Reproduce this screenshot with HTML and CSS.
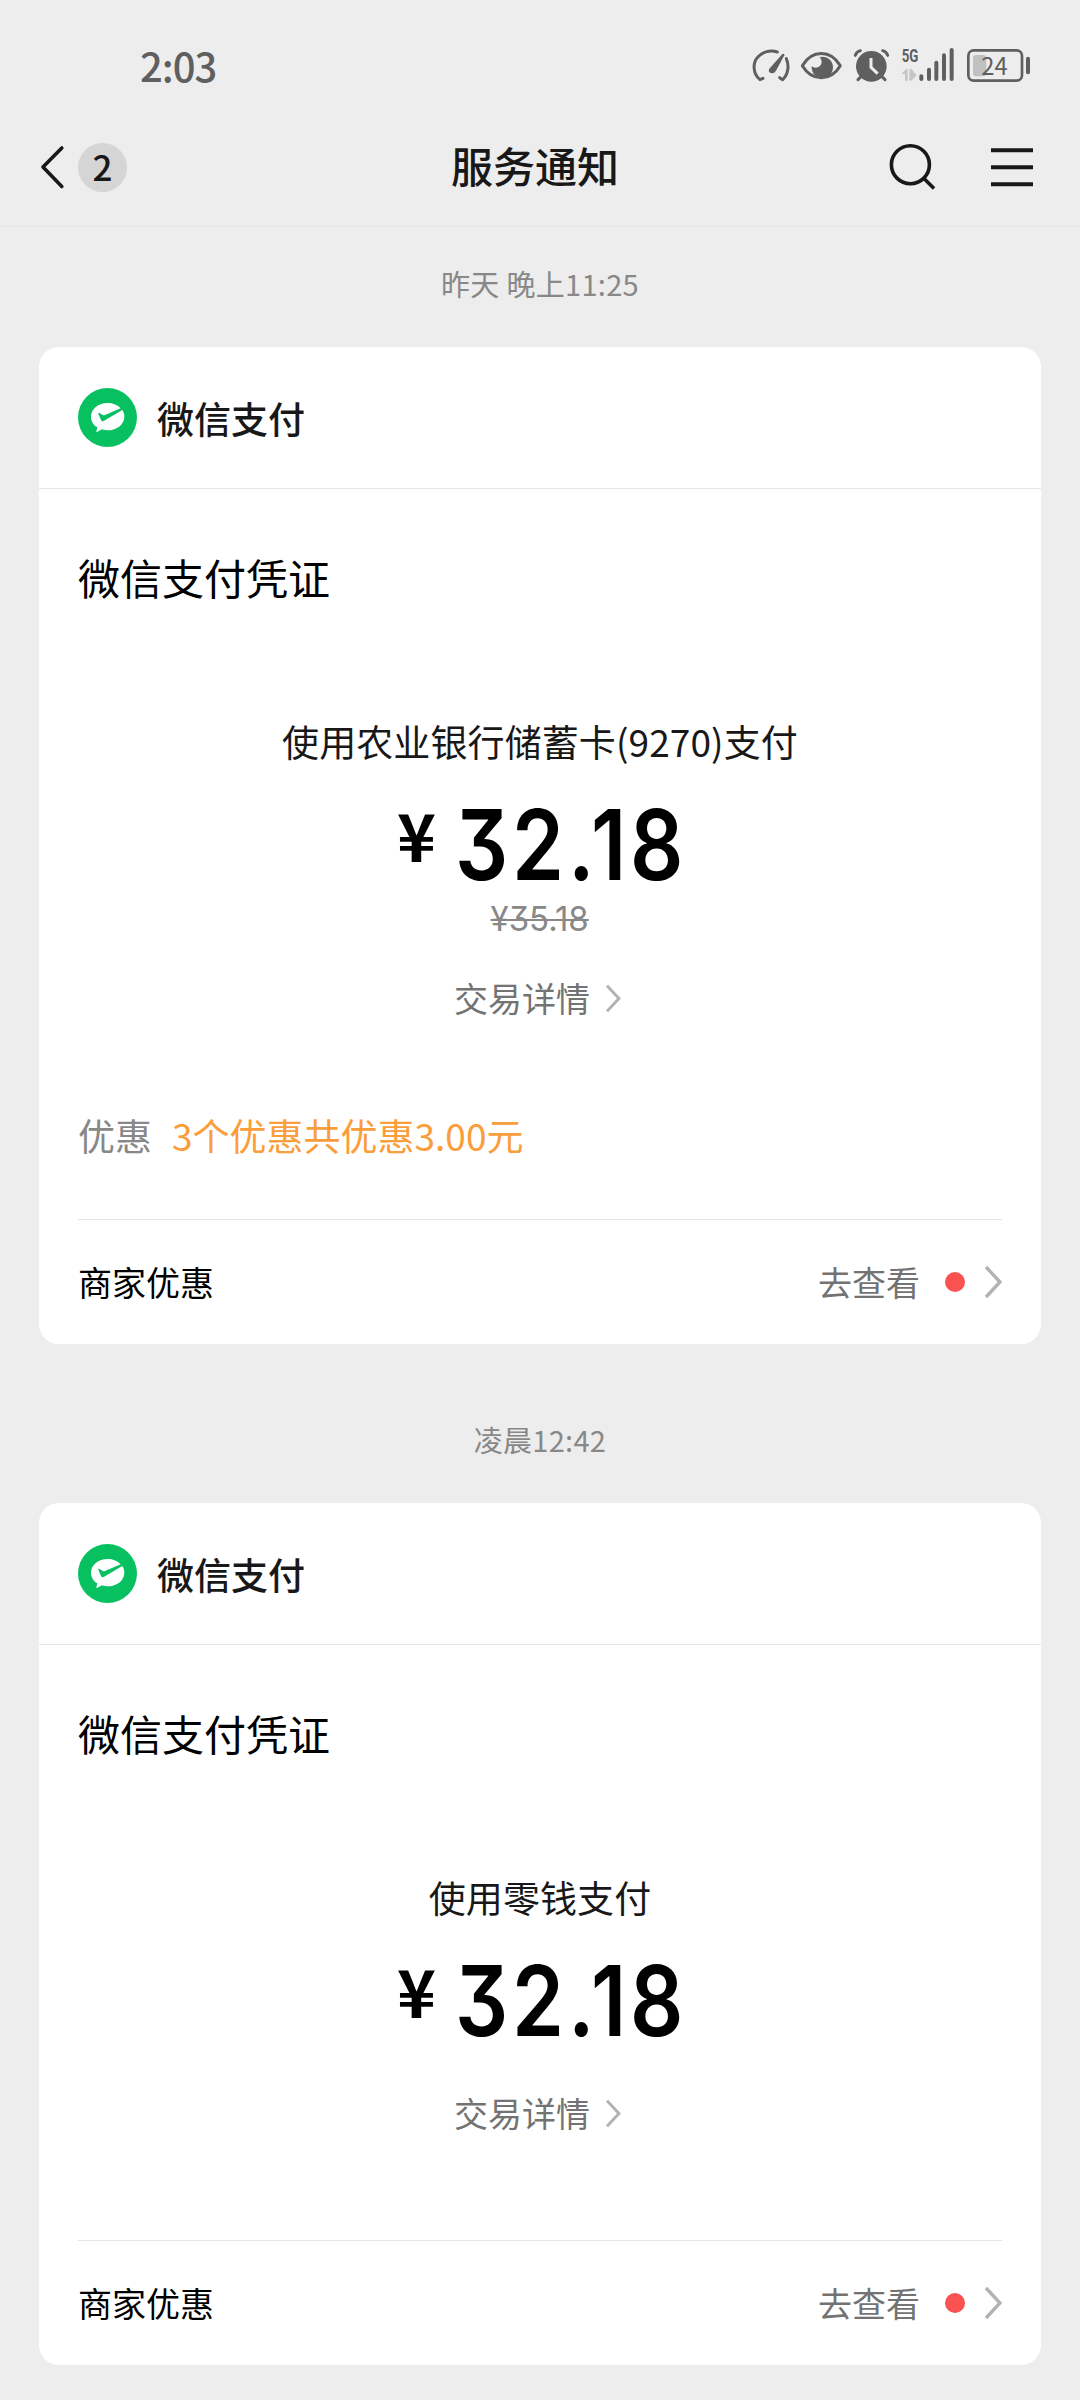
FILE: index.html
```html
<!DOCTYPE html>
<html lang="zh-CN">
<head>
<meta charset="utf-8">
<title>服务通知</title>
<link rel="stylesheet" href="styles.css">
</head>
<body>
<svg class="defs" aria-hidden="true">
  <symbol id="pay-logo" viewBox="174 174 177 177">
    <circle cx="262.500" cy="262.500" r="88.500" fill="#07c160"/>
    <path fill="#fff" d="M263 219C235 219 213 237 213 260C213 273 220 285 232 292L229 304Q229 307 232 305L246 298Q254 301 263 301C291 301 313 283 313 260C313 252 311 246 307 240L251 273Q246 276 243 270L235 251Q235 247 239 249L248 255Q251 257 255 255L302 235C293 225 279 219 263 219Z"/>
  </symbol>
  <symbol id="chevron" viewBox="0 0 18 34">
    <path d="M2 2L16 17L2 32" fill="none" stroke="#b2b2b2" stroke-width="3.400"/>
  </symbol>
</svg>

<header class="top">
  <div class="status">
    <span class="clock">2:03</span>
    <div class="status-icons">
      <svg width="48" height="38" viewBox="66 48 144 114">
        <g fill="none" stroke="#5f5f5f" stroke-width="9" stroke-linecap="round" stroke-linejoin="round">
          <path d="M99 145L90 149C70 133 66 101 83 82C98 64 122 60 142 66M169 86C178 107 175 133 158 149L149 143"/>
        </g>
        <path fill="#5f5f5f" d="M157 72Q163 69 163 76L138 122Q132 132 122 129Q113 124 118 116Z"/>
      </svg>
      <svg width="52" height="38" viewBox="210 48 156 114">
        <circle cx="277" cy="112" r="32" fill="#5f5f5f"/>
        <circle cx="257" cy="95" r="18" fill="#ededed"/>
        <path d="M217 107C246 58 302 58 331 107C302 155 246 155 217 107Z" fill="none" stroke="#5f5f5f" stroke-width="9" stroke-linejoin="round"/>
      </svg>
      <svg width="48" height="38" viewBox="366 48 144 114">
        <circle cx="424" cy="109" r="46" fill="#5f5f5f"/>
        <g fill="none" stroke="#5f5f5f" stroke-width="9" stroke-linecap="round">
          <path d="M376 76Q380 65 391 62M458 62Q469 65 473 76M392 141L384 149M457 141L465 149"/>
        </g>
        <path d="M423 84V112L443 131" fill="none" stroke="#ededed" stroke-width="9"/>
      </svg>
      <svg width="66" height="38" viewBox="510 48 198 114">
        <text class="net" x="515" y="96" textLength="50" lengthAdjust="spacingAndGlyphs">5G</text>
        <path fill="#c6c6c6" d="M514 132L528 117H533V152H525V132ZM538 117H544L560 136L544 152H538Z"/>
        <g stroke="#5f5f5f" stroke-width="12" stroke-linecap="round">
          <path d="M574 139V147M597 119V147M619 98V147M642 76V147M665 60V147"/>
        </g>
      </svg>
      <svg width="65" height="38" viewBox="708 48 195 114">
        <rect x="729" y="75" width="40" height="64" rx="9" fill="#c0c0c0"/>
        <rect x="715" y="61" width="161" height="91" rx="16" fill="none" stroke="#5f5f5f" stroke-width="8"/>
        <path d="M894 86V127" stroke="#5f5f5f" stroke-width="12" stroke-linecap="round"/>
        <text class="level" x="754" y="134" textLength="79" lengthAdjust="spacingAndGlyphs">24</text>
      </svg>
    </div>
  </div>
  <nav class="nav">
    <div class="nav-back">
      <svg width="26" height="46" viewBox="0 0 26 46"><path d="M22.800 4L4 23L22.800 42.500" fill="none" stroke="#181818" stroke-width="3.600" stroke-linecap="round" stroke-linejoin="round"/></svg>
      <span class="count">2</span>
    </div>
    <h1 class="nav-title">服务通知</h1>
    <div class="nav-actions">
      <svg width="48" height="48" viewBox="0 0 48 48"><g fill="none" stroke="#181818" stroke-width="3.600"><circle cx="22.400" cy="21.700" r="19"/><path d="M35.500 35L46 45.500"/></g></svg>
      <svg width="42" height="48" viewBox="0 0 42 48"><path d="M0 7.300H42M0 24.300H42M0 41.300H42" stroke="#181818" stroke-width="4"/></svg>
    </div>
  </nav>
</header>

<main class="feed">
  <time class="stamp">昨天 晚上11:25</time>
  <article class="card">
    <header class="card-head"><svg class="logo"><use href="#pay-logo"/></svg><span>微信支付</span></header>
    <div class="card-body">
      <h2 class="card-title">微信支付凭证</h2>
      <p class="method">使用农业银行储蓄卡(9270)支付</p>
      <p class="amount"><span class="yen">¥</span><span class="value">32.18</span></p>
      <p class="origin"><span class="origin-text">¥35.18</span></p>
      <a class="detail">交易详情<svg class="chev-s"><use href="#chevron"/></svg></a>
      <p class="promo"><span class="promo-label">优惠</span><span class="promo-text">3个优惠共优惠3.00元</span></p>
    </div>
    <footer class="card-foot"><span>商家优惠</span><a class="more">去查看<i class="dot"></i><svg class="chev"><use href="#chevron"/></svg></a></footer>
  </article>

  <time class="stamp">凌晨12:42</time>
  <article class="card card-plain">
    <header class="card-head"><svg class="logo"><use href="#pay-logo"/></svg><span>微信支付</span></header>
    <div class="card-body">
      <h2 class="card-title">微信支付凭证</h2>
      <p class="method">使用零钱支付</p>
      <p class="amount"><span class="yen">¥</span><span class="value">32.18</span></p>
      <a class="detail">交易详情<svg class="chev-s"><use href="#chevron"/></svg></a>
    </div>
    <footer class="card-foot"><span>商家优惠</span><a class="more">去查看<i class="dot"></i><svg class="chev"><use href="#chevron"/></svg></a></footer>
  </article>
</main>
</body>
</html>
```
FILE: styles.css
```css
* { box-sizing: border-box; margin: 0; padding: 0; }
body {
  width: 1080px;
  height: 2400px;
  overflow: hidden;
  background: #ededed;
  color: #000;
  font-family: "Noto Sans CJK SC", sans-serif;
  font-weight: 400;
}
svg { display: block; flex: none; }
.defs { position: absolute; width: 0; height: 0; }

.top { height: 227px; border-bottom: 2px solid #e8e8e8; }
.status {
  display: flex;
  justify-content: space-between;
  align-items: center;
  height: 108px;
  padding: 22px 49px 0 140px;
}
.clock { font-size: 40px; font-weight: 500; line-height: 40px; letter-spacing: -1px; color: #5f5f5f; }
.status-icons { display: flex; }
.net { font: 700 56px Roboto, sans-serif; fill: #5f5f5f; }
.level { font: 400 73px "Noto Sans CJK SC", sans-serif; fill: #5f5f5f; }

.nav {
  display: grid;
  grid-template-columns: 1fr auto 1fr;
  align-items: center;
  height: 118px;
  padding: 0 47px 0 39px;
  color: #181818;
}
.nav-back { display: flex; align-items: center; gap: 13px; }
.count {
  width: 49px;
  height: 49px;
  border-radius: 50%;
  background: #d5d5d5;
  font-size: 35px;
  font-weight: 500;
  line-height: 46px;
  text-align: center;
}
.nav-title { font-size: 42px; font-weight: 500; line-height: 60px; padding-bottom: 4px; margin-right: 2px; }
.nav-actions { display: flex; justify-content: flex-end; gap: 55px; }

.feed { padding: 0 39px; }
.stamp {
  display: block;
  height: 120px;
  padding-top: 36px;
  font-size: 29px;
  letter-spacing: .3px;
  line-height: 40px;
  text-align: center;
  color: #888;
}
.card { height: 997px; border-radius: 20px; background: #fff; display: flex; flex-direction: column; }
.card + .stamp { height: 159px; padding-top: 75px; }
.card-plain { height: 862px; }
.card-head {
  display: flex;
  align-items: center;
  gap: 20px;
  height: 142px;
  padding: 0 39px;
  border-bottom: 1px solid #e5e5e5;
  font-size: 37px;
  font-weight: 500;
  line-height: 54px;
  color: #181818;
}
.logo { width: 59px; height: 59px; }
.card-body { flex: 1; padding: 58px 39px 0; text-align: center; }
.card-title { font-size: 42px; font-weight: 400; line-height: 60px; text-align: left; }
.method { margin-top: 107px; font-size: 37px; line-height: 54px; letter-spacing: .1px; color: #181818; }
.amount { display: flex; justify-content: center; height: 84px; margin-top: 35px; }
.value {
  width: 226px;
  font: 600 97px/84px Inter, sans-serif;
  font-feature-settings: "cv09";
  letter-spacing: 4.500px;
  transform: scaleX(.86);
  transform-origin: left;
}
.yen {
  width: 58px;
  font: 700 66px/60px "Noto Sans CJK SC", sans-serif;
  text-align: left;
  margin-left: -2px;
}
.origin { height: 52px; padding-top: 12px; display: flex; justify-content: center; color: #888; }
.origin-text {
  font: 400 34px/40px Inter, sans-serif;
  font-feature-settings: "cv09";
  text-decoration: line-through;
  text-decoration-thickness: 2px;
  transform: scaleX(.97);
}
.detail {
  display: flex;
  justify-content: center;
  align-items: center;
  gap: 15px;
  height: 50px;
  margin-top: 45px;
  padding-right: 5px;
  font-size: 34px;
  line-height: 50px;
  color: #737373;
}
.origin + .detail { margin-top: 34px; }
.chev-s { width: 16px; height: 29px; }
.promo {
  display: flex;
  gap: 20px;
  margin-top: 85px;
  font-size: 37px;
  line-height: 54px;
}
.promo-label { color: #888; }
.promo-text { color: #fa9d3b; }
.card-foot {
  display: flex;
  justify-content: space-between;
  align-items: center;
  height: 125px;
  margin: 0 39px;
  border-top: 1px solid #e5e5e5;
  font-size: 34px;
  line-height: 50px;
}
.more { display: flex; align-items: center; color: #737373; }
.dot { width: 20px; height: 20px; margin: 0 19px 0 25px; border-radius: 50%; background: #fa5151; }
.chev { width: 18px; height: 34px; }
```
